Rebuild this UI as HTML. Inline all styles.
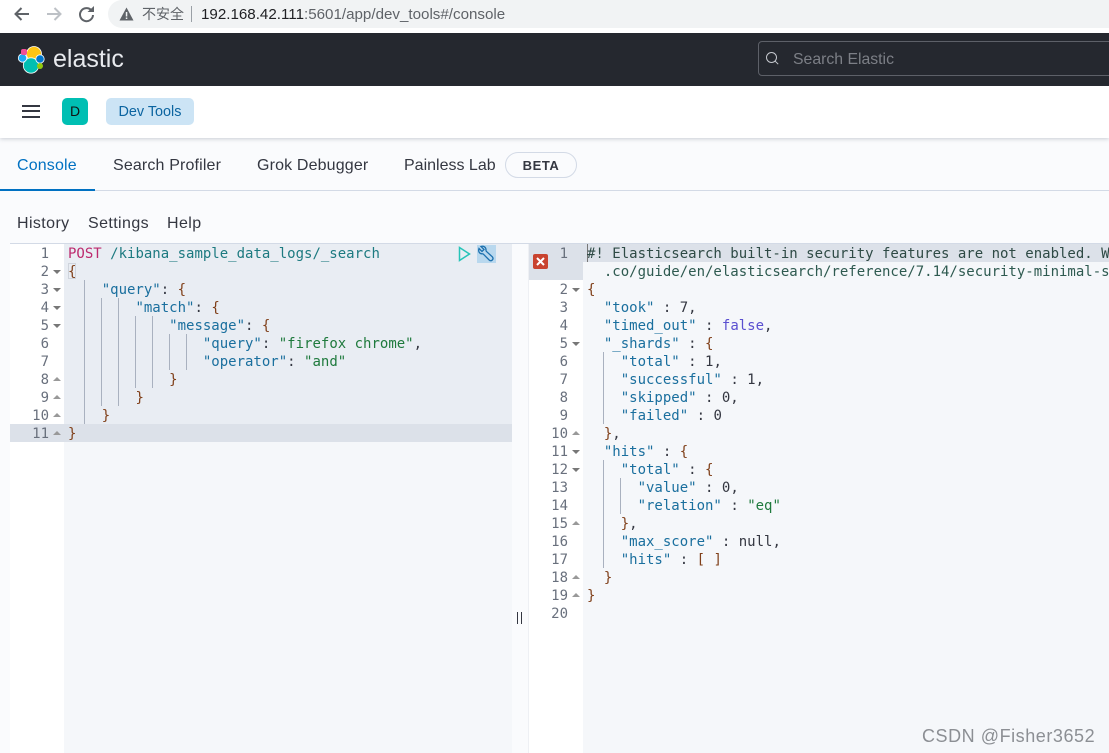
<!DOCTYPE html>
<html><head><meta charset="utf-8"><style>
html,body{margin:0;padding:0}
body{width:1109px;height:753px;overflow:hidden;position:relative;background:#fafbfd;font-family:"Liberation Sans","Noto Sans CJK SC",sans-serif}
.a{position:absolute;white-space:pre}
.box{position:absolute}
.ln,.c{position:absolute;font:14px/18px "DejaVu Sans Mono",monospace;white-space:pre}
.ln{color:#69707d;text-align:right;width:30px}
.c{color:#343741}
.k{color:#1a6f9e}.s{color:#1f7a3d}.p{color:#343741}.b{color:#80401a}.m{color:#bd2a6e}.n{color:#0a7ea8}.l{color:#5a4fd0}
.g{position:absolute;width:1px;background:#a9b1bf}
.up,.dn{position:absolute;width:0;height:0;border-left:4px solid transparent;border-right:4px solid transparent}
.dn{border-top:4px solid #777}.up{border-bottom:4px solid #999}
</style></head><body>
<div class="box" style="left:0;top:0;width:1109px;height:33px;background:#fff"></div>
<svg class="box" style="left:12px;top:3px" width="90" height="22" viewBox="0 0 90 22" fill="none"><path d="M17 11H4M9.500 5L3.500 11l6 6" stroke="#5f6368" stroke-width="2"/><path d="M35 11h13M42.500 5l6 6-6 6" stroke="#bdc1c6" stroke-width="2"/><path d="M79.500 7.500A6.500 6.500 0 1 0 81 12" stroke="#5f6368" stroke-width="2"/><path d="M75.500 9h6.500V3z" fill="#5f6368"/></svg>
<div class="box" style="left:108px;top:0;width:1001px;height:28px;background:#f1f3f4;border-radius:14px 0 0 14px"></div>
<svg class="box" style="left:119px;top:7px" width="15" height="14"><path d="M7.500 0.500L14.500 13.500H0.500Z" fill="#5f6368"/><rect x="6.800" y="5" width="1.500" height="4.500" fill="#f1f3f4"/><rect x="6.800" y="10.500" width="1.500" height="1.500" fill="#f1f3f4"/></svg>
<div class="a" style="left:142px;top:6px;font-size:14px;line-height:16px;color:#5f6368">不安全</div>
<div class="box" style="left:191px;top:6px;width:1px;height:16px;background:#9aa0a6"></div>
<div class="a" style="left:201px;top:6px;font-size:15.150px;line-height:18px;color:#5f6368"><span style="color:#202124">192.168.42.111</span>:5601/app/dev_tools#/console</div>

<div class="box" style="left:0;top:33px;width:1109px;height:53px;background:#25282f"></div>
<svg class="box" style="left:17px;top:45px" width="29" height="29" viewBox="0 0 29 29"><circle cx="17" cy="9" r="7.500" fill="#fec514" stroke="#fff" stroke-width=".8"/><circle cx="14" cy="20.500" r="7.700" fill="#00bfb3" stroke="#fff" stroke-width=".8"/><circle cx="5.500" cy="13" r="4.200" fill="#1ba9f5" stroke="#fff" stroke-width=".8"/><circle cx="23" cy="14" r="4.200" fill="#0077cc" stroke="#fff" stroke-width=".8"/><rect x="4" y="4" width="6" height="6" rx="2" fill="#f04e98"/><circle cx="23" cy="21" r="3" fill="#93c90e"/></svg>
<div class="a" style="left:53px;top:43px;font-size:25px;line-height:32px;color:#e8eaee">elastic</div>
<div class="box" style="left:758px;top:41px;width:360px;height:35px;border:1px solid #5d6068;border-radius:4px;box-sizing:border-box"></div>
<svg class="box" style="left:765px;top:51px" width="15" height="15" fill="none" stroke="#c5c8ce"><circle cx="6.500" cy="6.500" r="5"/><path d="M10.200 10.200l3 3"/></svg>
<div class="a" style="left:793px;top:51px;font-size:15.800px;line-height:18px;color:#7c7f86">Search Elastic</div>

<div class="box" style="left:0;top:86px;width:1109px;height:52px;background:#fff;box-shadow:0 1px 4px rgba(60,70,90,.25)"></div>
<div class="box" style="left:22px;top:105px;width:18px;height:2px;background:#343741"></div>
<div class="box" style="left:22px;top:110px;width:18px;height:2px;background:#343741"></div>
<div class="box" style="left:22px;top:116px;width:18px;height:2px;background:#343741"></div>
<div class="box" style="left:62px;top:98px;width:26px;height:27px;border-radius:5px;background:#00bfb3"></div>
<div class="a" style="left:62px;top:103px;width:26px;text-align:center;font-size:14px;line-height:17px;color:#111">D</div>
<div class="box" style="left:106px;top:98px;width:88px;height:27px;border-radius:5px;background:#cce4f5"></div>
<div class="a" style="left:106px;top:104px;width:88px;text-align:center;font-size:14.400px;line-height:17px;color:#0b64a0">Dev Tools</div>

<div class="a" style="left:17px;top:156px;font-size:16px;line-height:20px;letter-spacing:.15px;color:#0071c2">Console</div>
<div class="a" style="left:113px;top:156px;font-size:16px;line-height:20px;letter-spacing:.15px;color:#343741">Search Profiler</div>
<div class="a" style="left:257px;top:156px;font-size:16px;line-height:20px;letter-spacing:.15px;color:#343741">Grok Debugger</div>
<div class="a" style="left:404px;top:156px;font-size:16px;line-height:20px;color:#343741">Painless Lab</div>
<div class="box" style="left:505px;top:152px;width:72px;height:26px;border:1px solid #d3dae6;border-radius:13px;box-sizing:border-box"></div>
<div class="a" style="left:505px;top:158px;width:72px;text-align:center;font-size:13px;font-weight:bold;line-height:16px;color:#343741;letter-spacing:.6px">BETA</div>
<div class="box" style="left:0;top:190px;width:1109px;height:1px;background:#d3dae6"></div>
<div class="box" style="left:0;top:189px;width:95px;height:2px;background:#0071c2"></div>
<div class="a" style="left:17px;top:214px;font-size:16px;line-height:20px;letter-spacing:.4px;color:#343741">History</div>
<div class="a" style="left:88px;top:214px;font-size:16px;line-height:20px;letter-spacing:.4px;color:#343741">Settings</div>
<div class="a" style="left:167px;top:214px;font-size:16px;line-height:20px;letter-spacing:.4px;color:#343741">Help</div>

<div class="box" style="left:10px;top:243px;width:1099px;height:1px;background:#d3dae6"></div>
<!-- left editor -->
<div class="box" style="left:10px;top:244px;width:54px;height:509px;background:#fff"></div>
<div class="box" style="left:64px;top:244px;width:448px;height:198px;background:#e9edf3"></div>
<div class="box" style="left:64px;top:442px;width:448px;height:311px;background:#f5f7fa"></div>
<div class="box" style="left:10px;top:424px;width:502px;height:18px;background:#dce1e9"></div>
<div class="g" style="left:84px;top:280px;height:144px"></div>
<div class="g" style="left:101px;top:298px;height:108px"></div>
<div class="g" style="left:118px;top:298px;height:108px"></div>
<div class="g" style="left:135px;top:316px;height:72px"></div>
<div class="g" style="left:152px;top:316px;height:72px"></div>
<div class="g" style="left:169px;top:334px;height:36px"></div>
<div class="g" style="left:186px;top:334px;height:36px"></div>
<div class="ln" style="left:19px;top:245px">1
2
3
4
5
6
7
8
9
10
11</div>
<div class="dn" style="left:53px;top:270px"></div><div class="dn" style="left:53px;top:288px"></div><div class="dn" style="left:53px;top:306px"></div><div class="dn" style="left:53px;top:324px"></div>
<div class="up" style="left:53px;top:377px"></div><div class="up" style="left:53px;top:395px"></div><div class="up" style="left:53px;top:413px"></div><div class="up" style="left:53px;top:431px"></div>
<div class="box" style="left:68px;top:263px;width:8px;height:16px;border:1px solid #cfd4dc;box-sizing:border-box"></div>
<div class="c" style="left:68px;top:245px"><span class="m">POST</span> <span style="color:#1d7a80">/kibana_sample_data_logs/_search</span>
<span class="b">{</span>
    <span class="k">"query"</span><span class="p">:</span> <span class="b">{</span>
        <span class="k">"match"</span><span class="p">:</span> <span class="b">{</span>
            <span class="k">"message"</span><span class="p">:</span> <span class="b">{</span>
                <span class="k">"query"</span><span class="p">:</span> <span class="s">"firefox chrome"</span><span class="p">,</span>
                <span class="k">"operator"</span><span class="p">:</span> <span class="s">"and"</span>
            <span class="b">}</span>
        <span class="b">}</span>
    <span class="b">}</span>
<span class="b">}</span></div>
<svg class="box" style="left:457px;top:245px" width="40" height="18" viewBox="0 0 40 18" fill="none"><rect x="20" y="0" width="19" height="18" fill="#b9d8ee"/><path d="M2.500 2.500V15.500L12.500 9Z" stroke="#27c4b8" stroke-width="1.500"/><path d="M22 3.500l3 3 2-2-3-3c2.500-.8 5 .5 5 3.500 0 .7 0 1 .3 1.300l6 5.500c2 2.500-1 5-3 3.300l-6-6c-.3-.3-.7-.3-1.300-.3-2.500 0-4-2.300-3-5.300z" stroke="#1c70ae" stroke-width="1.300"/></svg>

<div class="box" style="left:512px;top:244px;width:17px;height:509px;background:#fafbfd"></div>
<div class="box" style="left:528px;top:244px;width:1px;height:509px;background:#eef0f4"></div>
<div class="box" style="left:517px;top:612px;width:1px;height:12px;background:#343741"></div>
<div class="box" style="left:521px;top:612px;width:1px;height:12px;background:#343741"></div>

<!-- right editor -->
<div class="box" style="left:529px;top:244px;width:54px;height:509px;background:#fff"></div>
<div class="box" style="left:583px;top:244px;width:526px;height:509px;background:#f5f7fa"></div>
<div class="box" style="left:529px;top:244px;width:54px;height:36px;background:#dce1e9"></div>
<div class="box" style="left:583px;top:244px;width:526px;height:18px;background:#dce1e9"></div>
<div class="box" style="left:587px;top:244px;width:1px;height:18px;background:#777"></div>
<div class="box" style="left:533px;top:254px;width:15px;height:15px;border-radius:2px;background:#c9432f"></div>
<svg class="box" style="left:533px;top:254px" width="15" height="15"><path d="M4 4l7 7M11 4l-7 7" stroke="#fff" stroke-width="2"/></svg>
<div class="g" style="left:603px;top:352px;height:72px"></div>
<div class="g" style="left:603px;top:460px;height:108px"></div>
<div class="g" style="left:620px;top:478px;height:36px"></div>
<div class="ln" style="left:538px;top:245px">1

2
3
4
5
6
7
8
9
10
11
12
13
14
15
16
17
18
19
20</div>
<div class="dn" style="left:572px;top:288px"></div><div class="dn" style="left:572px;top:342px"></div><div class="dn" style="left:572px;top:450px"></div><div class="dn" style="left:572px;top:468px"></div>
<div class="up" style="left:572px;top:431px"></div><div class="up" style="left:572px;top:521px"></div><div class="up" style="left:572px;top:575px"></div><div class="up" style="left:572px;top:593px"></div>
<div class="box" style="left:583px;top:244px;width:526px;height:380px;overflow:hidden">
<div class="c" style="left:4px;top:1px"><span style="color:#2e4a45">#! Elasticsearch built-in security features are not enabled. Without authentication, your cluster</span>
<span style="color:#2e5a50">  .co/guide/en/elasticsearch/reference/7.14/security-minimal-setup.html to enable security.</span>
<span class="b">{</span>
  <span class="k">"took"</span> <span class="p">:</span> <span class="p">7,</span>
  <span class="k">"timed_out"</span> <span class="p">:</span> <span class="l">false</span><span class="p">,</span>
  <span class="k">"_shards"</span> <span class="p">:</span> <span class="b">{</span>
    <span class="k">"total"</span> <span class="p">: 1,</span>
    <span class="k">"successful"</span> <span class="p">: 1,</span>
    <span class="k">"skipped"</span> <span class="p">: 0,</span>
    <span class="k">"failed"</span> <span class="p">: 0</span>
  <span class="b">}</span><span class="p">,</span>
  <span class="k">"hits"</span> <span class="p">:</span> <span class="b">{</span>
    <span class="k">"total"</span> <span class="p">:</span> <span class="b">{</span>
      <span class="k">"value"</span> <span class="p">: 0,</span>
      <span class="k">"relation"</span> <span class="p">:</span> <span class="s">"eq"</span>
    <span class="b">}</span><span class="p">,</span>
    <span class="k">"max_score"</span> <span class="p">: null,</span>
    <span class="k">"hits"</span> <span class="p">:</span> <span class="b">[ ]</span>
  <span class="b">}</span>
<span class="b">}</span></div></div>
<div class="a" style="left:922px;top:725px;font-size:18px;line-height:22px;color:#8c8f94;letter-spacing:.55px">CSDN @Fisher3652</div>
</body></html>
